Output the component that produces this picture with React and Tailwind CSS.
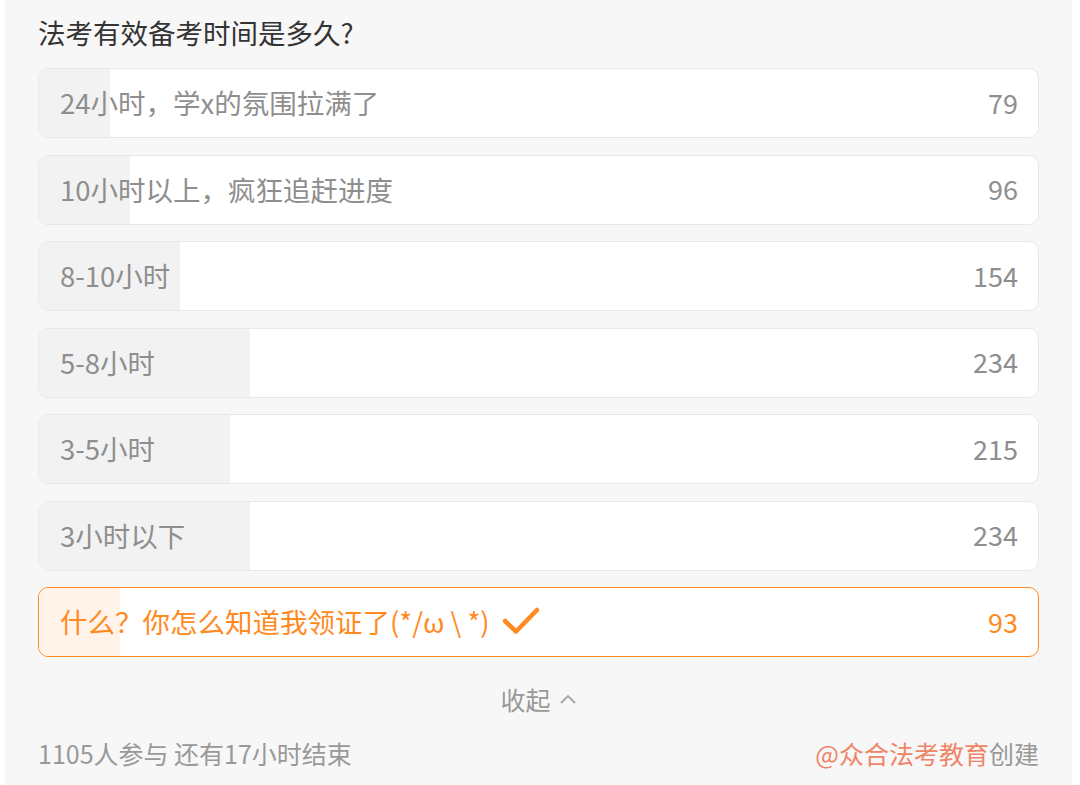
import React from "react";

const options = [
  { label: "24小时，学x的氛围拉满了", count: 79, fill: 71 },
  { label: "10小时以上，疯狂追赶进度", count: 96, fill: 91 },
  { label: "8-10小时", count: 154, fill: 141 },
  { label: "5-8小时", count: 234, fill: 211 },
  { label: "3-5小时", count: 215, fill: 191 },
  { label: "3小时以下", count: 234, fill: 211 },
  { label: "什么？你怎么知道我领证了(*/ω \\ *)", count: 93, fill: 81, picked: true },
];

function Check() {
  return (
    <svg width="38" height="30" viewBox="0 0 38 30" className="ml-[12px] shrink-0">
      <path
        d="M3 14 L14 24.5 L35 3"
        fill="none"
        stroke="#ff8a1f"
        strokeWidth="4.5"
        strokeLinecap="round"
        strokeLinejoin="round"
      />
    </svg>
  );
}

function Option({ label, count, fill, picked }) {
  return (
    <div
      className={
        "relative flex h-[70px] items-center overflow-hidden rounded-[10px] bg-white pl-[21px] pr-[20px] " +
        (picked ? "border-[1.5px] border-[#ff8a1f]" : "border-[1.5px] border-[#e8e8e8]")
      }
    >
      <div
        className={"absolute inset-y-0 left-0 " + (picked ? "bg-[#fff3ea]" : "bg-[#f2f2f2]")}
        style={{ width: fill }}
      />
      <div
        className={
          "relative flex flex-1 items-center text-[27.5px] " +
          (picked ? "text-[#ff8a1f]" : "text-[#8e8e8e]")
        }
      >
        <span>{label}</span>
        {picked && <Check />}
      </div>
      <span className={"relative text-[27px] " + (picked ? "text-[#ff8a1f]" : "text-[#8e8e8e]")}>
        {count}
      </span>
    </div>
  );
}

export default function App() {
  return (
    <div className="min-h-screen bg-white font-['Noto_Sans_CJK_SC',sans-serif]">
      <div className="ml-[5px] min-h-screen w-[1067px] bg-[#f7f7f7] px-[33px] pt-[14px] pb-[10px]">
        <h1 className="text-[27.5px] leading-[36px] font-normal text-[#333333]">
          法考有效备考时间是多久?
        </h1>
        <div className="mt-[18px] flex flex-col gap-[16.5px]">
          {options.map((o) => (
            <Option key={o.label} {...o} />
          ))}
        </div>
        <div className="mt-[24px] flex items-center justify-center text-[25px] leading-[36px] text-[#999999]">
          <span>收起</span>
          <svg width="18" height="12" viewBox="0 0 18 12" className="ml-[8px]">
            <path d="M2 10 L9 3 L16 10" fill="none" stroke="#a6a6a6" strokeWidth="1.8" />
          </svg>
        </div>
        <div className="mt-[18px] flex items-center justify-between text-[25px] leading-[36px]">
          <span className="text-[#999999]">1105人参与 还有17小时结束</span>
          <span>
            <span className="text-[#ee8566]">@众合法考教育</span>
            <span className="text-[#999999]">创建</span>
          </span>
        </div>
      </div>
    </div>
  );
}
